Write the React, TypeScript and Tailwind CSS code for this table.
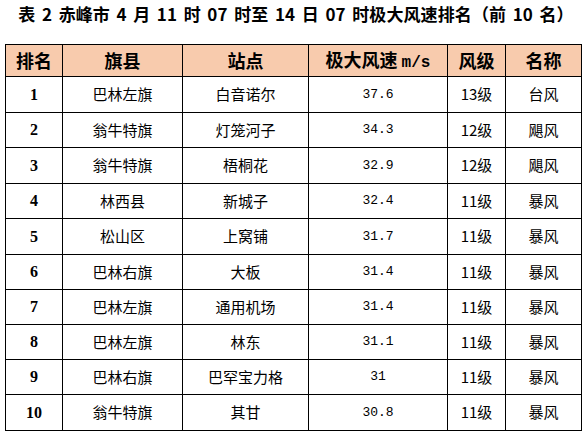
import React from "react";

const rows: [string, string, string, string, string, string][] = [
  ["1", "巴林左旗", "白音诺尔", "37.6", "13级", "台风"],
  ["2", "翁牛特旗", "灯笼河子", "34.3", "12级", "飓风"],
  ["3", "翁牛特旗", "梧桐花", "32.9", "12级", "飓风"],
  ["4", "林西县", "新城子", "32.4", "11级", "暴风"],
  ["5", "松山区", "上窝铺", "31.7", "11级", "暴风"],
  ["6", "巴林右旗", "大板", "31.4", "11级", "暴风"],
  ["7", "巴林左旗", "通用机场", "31.4", "11级", "暴风"],
  ["8", "巴林左旗", "林东", "31.1", "11级", "暴风"],
  ["9", "巴林右旗", "巴罕宝力格", "31", "11级", "暴风"],
  ["10", "翁牛特旗", "其甘", "30.8", "11级", "暴风"],
];

const heights = ["h-[36px]", "h-[35px]", "h-[36px]", "h-[35px]", "h-[36px]", "h-[35px]", "h-[35px]", "h-[35px]", "h-[35px]", "h-[36px]"];

const cjk = "font-['Noto_Sans_CJK_SC',sans-serif]";

export default function App() {
  return (
    <div className="w-[585px] h-[435px] bg-white overflow-hidden relative">
      <div className={`h-[44px] pt-[3px] pl-[7px] flex justify-center text-[17px] font-bold text-black leading-[22px] ${cjk} whitespace-pre [word-spacing:2.6px] tracking-[0.1px]`}>
        表 2 赤峰市 4 月 11 时 07 时至 14 日 07 时极大风速排名（前 10 名）
      </div>
      <table className="ml-[5px] border-collapse table-fixed w-[576px] text-black">
        <colgroup>
          <col className="w-[57px]" />
          <col className="w-[120px]" />
          <col className="w-[126px]" />
          <col className="w-[139px]" />
          <col className="w-[58px]" />
          <col className="w-[76px]" />
        </colgroup>
        <thead>
          <tr className={`h-[32px] bg-[#f8cbad] text-[18px] font-bold ${cjk}`}>
            <th className="border border-black p-0 align-middle">排名</th>
            <th className="border border-black p-0 align-middle">旗县</th>
            <th className="border border-black p-0 align-middle">站点</th>
            <th className="border border-black p-0 align-middle">
              极大风速<span className="font-['Liberation_Mono',monospace] text-[16px] ml-[4px]">m/s</span>
            </th>
            <th className="border border-black p-0 align-middle">风级</th>
            <th className="border border-black p-0 align-middle">名称</th>
          </tr>
        </thead>
        <tbody>
          {rows.map((r, i) => (
            <tr key={i} className={heights[i]}>
              <td className="border border-black p-0 text-center align-middle font-['Liberation_Serif',serif] font-bold text-[16px]">{r[0]}</td>
              <td className={`border border-black p-0 text-center align-middle text-[15px] ${cjk}`}>{r[1]}</td>
              <td className={`border border-black p-0 text-center align-middle text-[15px] ${cjk}`}>{r[2]}</td>
              <td className="border border-black p-0 text-center align-middle font-['Liberation_Mono',monospace] text-[13px]">{r[3]}</td>
              <td className={`border border-black p-0 text-center align-middle text-[15px] ${cjk}`}>{r[4]}</td>
              <td className={`border border-black p-0 text-center align-middle text-[15px] ${cjk}`}>{r[5]}</td>
            </tr>
          ))}
        </tbody>
      </table>
    </div>
  );
}
